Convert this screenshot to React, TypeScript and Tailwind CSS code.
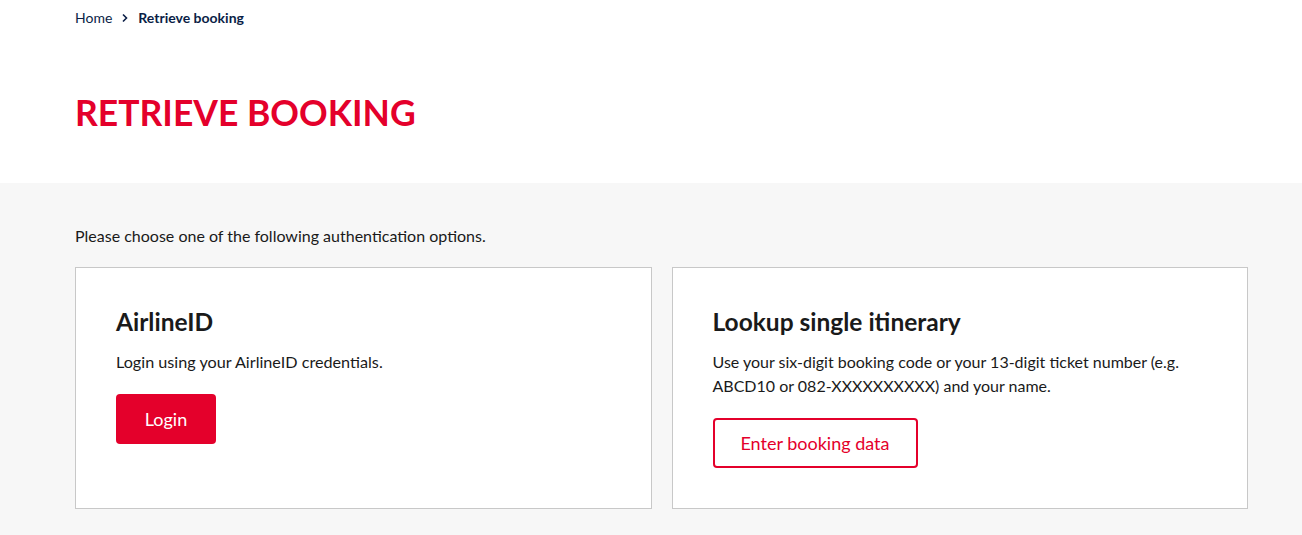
import React from "react"

const font = { fontFamily: "Lato, 'Noto Sans', sans-serif" }

function Chevron() {
  return (
    <svg width="8" height="10" viewBox="0 0 8 10" className="mx-[9px]">
      <path d="M2 1.5 L5.5 5 L2 8.5" fill="none" stroke="#0a1e46" strokeWidth="1.6" />
    </svg>
  )
}

export default function App() {
  return (
    <div className="min-h-[535px] bg-white text-[#1a1a1a]" style={font}>
      <div className="bg-white h-[183px]">
        <div className="pl-[75px]">
          <nav className="flex items-center h-[35px] text-[14px] text-[#0a1e46]">
            <span>Home</span>
            <Chevron />
            <span className="font-bold">Retrieve booking</span>
          </nav>
          <h1 className="mt-[55px] text-[35.5px] leading-[46px] font-bold text-[#e4002b]">
            RETRIEVE BOOKING
          </h1>
        </div>
      </div>

      <div className="bg-[#f7f7f7] pt-[41px] pb-[26px] min-h-[352px]">
        <div className="ml-[75px] w-[1173px]">
          <p className="text-[16px] leading-[24px] text-[#1a1a1a] mb-[19px]">
            Please choose one of the following authentication options.
          </p>
          <div className="grid grid-cols-2 gap-[20px]">
            <div className="bg-white border border-[#c8c8c8] px-[40px] pt-[40px] pb-[40px]">
              <h2 className="text-[24.5px] leading-[28px] font-bold text-[#1a1a1a] mb-[14px]">AirlineID</h2>
              <p className="text-[16.2px] leading-[24px] mb-[20px]">Login using your AirlineID credentials.</p>
              <button className="h-[50px] w-[100px] rounded-[4px] bg-[#e4002b] text-white text-[18px]">
                Login
              </button>
            </div>
            <div className="bg-white border border-[#c8c8c8] px-[40px] pt-[40px] pb-[40px]">
              <h2 className="text-[24.5px] leading-[28px] font-bold text-[#1a1a1a] mb-[14px]">Lookup single itinerary</h2>
              <p className="text-[16px] leading-[24px] mb-[20px] pr-[20px]">
                Use your six-digit booking code or your 13-digit ticket number (e.g. ABCD10 or 082-XXXXXXXXXX) and your name.
              </p>
              <button className="h-[50px] w-[205px] rounded-[4px] border-2 border-[#e4002b] bg-white text-[#e4002b] text-[18px]">
                Enter booking data
              </button>
            </div>
          </div>
        </div>
      </div>
    </div>
  )
}
